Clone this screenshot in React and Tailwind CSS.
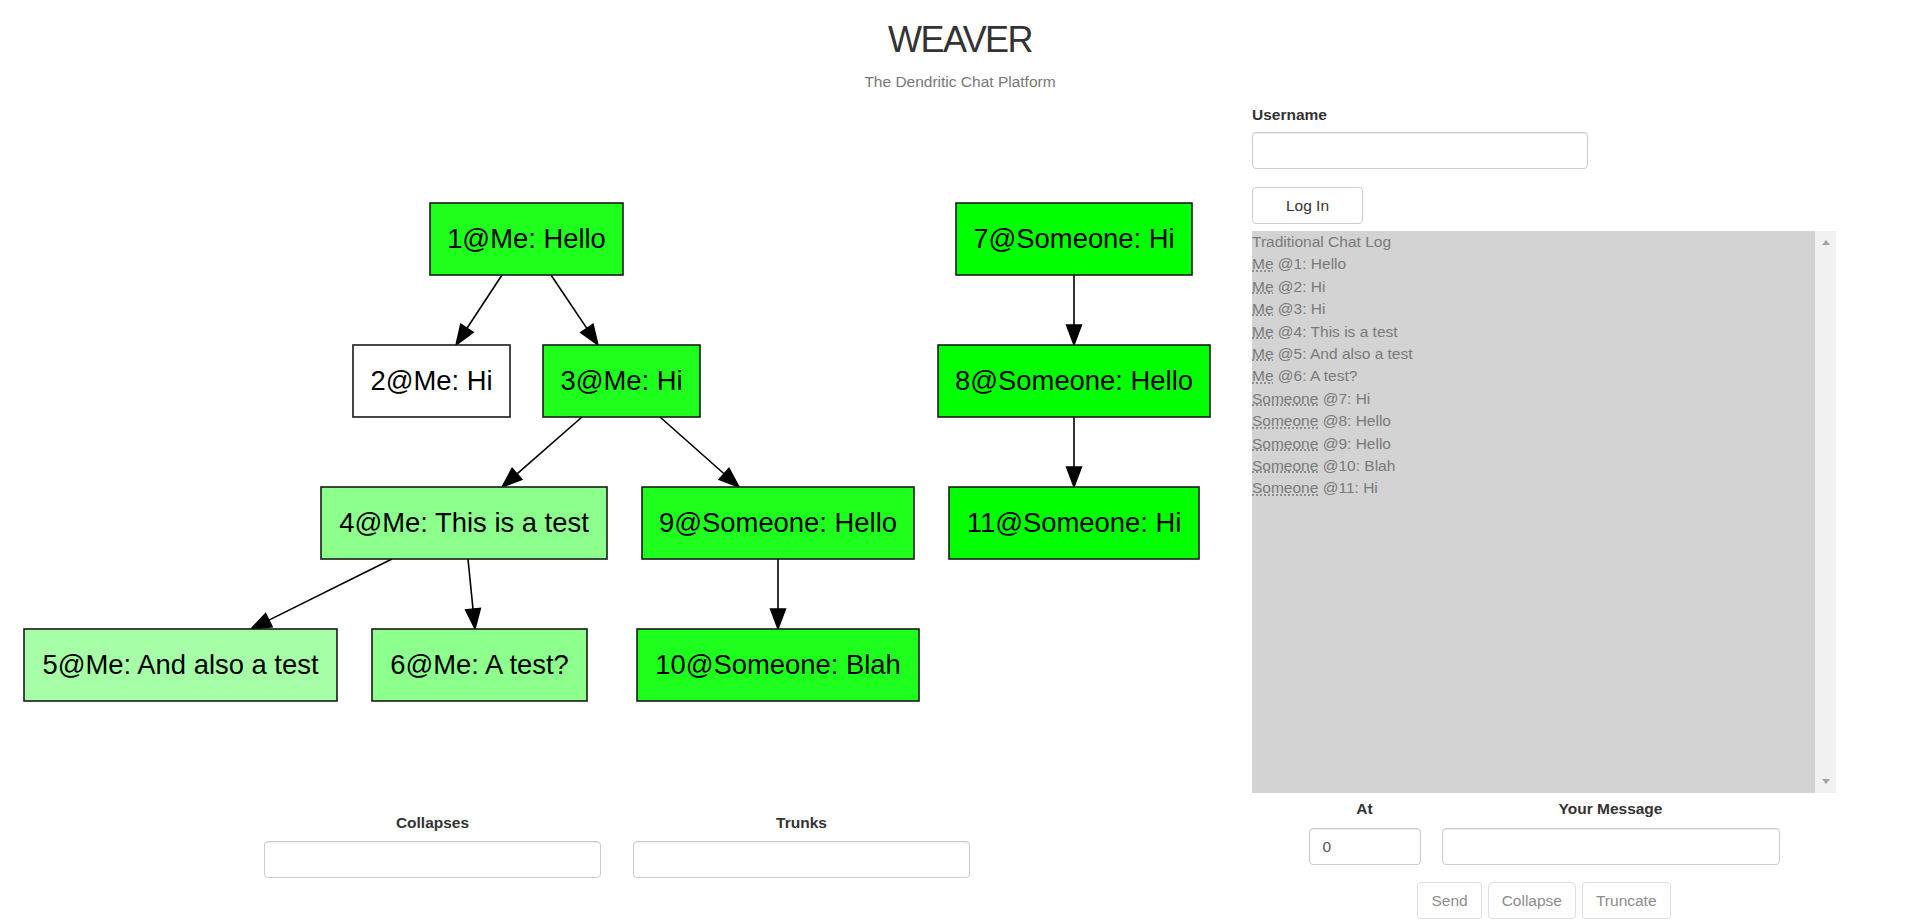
import React from "react"

const nodes = [
  { id: 1, x: 430, y: 203, w: 193, label: "1@Me: Hello", fill: "#1eff1e" },
  { id: 2, x: 353, y: 345, w: 157, label: "2@Me: Hi", fill: "#ffffff" },
  { id: 3, x: 543, y: 345, w: 157, label: "3@Me: Hi", fill: "#1eff1e" },
  { id: 4, x: 321, y: 487, w: 286, label: "4@Me: This is a test", fill: "#8cff8c" },
  { id: 5, x: 24, y: 629, w: 313, label: "5@Me: And also a test", fill: "#a6ffa6" },
  { id: 6, x: 372, y: 629, w: 215, label: "6@Me: A test?", fill: "#8cff8c" },
  { id: 7, x: 956, y: 203, w: 236, label: "7@Someone: Hi", fill: "#00ff00" },
  { id: 8, x: 938, y: 345, w: 272, label: "8@Someone: Hello", fill: "#00ff00" },
  { id: 9, x: 642, y: 487, w: 272, label: "9@Someone: Hello", fill: "#1eff1e" },
  { id: 10, x: 637, y: 629, w: 282, label: "10@Someone: Blah", fill: "#1eff1e" },
  { id: 11, x: 949, y: 487, w: 250, label: "11@Someone: Hi", fill: "#00ff00" },
]

// edges: start point on parent, tip on child
const edges = [
  [502, 275, 456, 345],
  [551, 275, 598, 345],
  [582, 417, 502, 487],
  [660, 417, 739, 487],
  [392, 559, 251, 629],
  [468, 559, 475, 629],
  [778, 559, 778, 629],
  [1074, 275, 1074, 345],
  [1074, 417, 1074, 487],
]

const log = [
  ["Me", 1, "Hello"],
  ["Me", 2, "Hi"],
  ["Me", 3, "Hi"],
  ["Me", 4, "This is a test"],
  ["Me", 5, "And also a test"],
  ["Me", 6, "A test?"],
  ["Someone", 7, "Hi"],
  ["Someone", 8, "Hello"],
  ["Someone", 9, "Hello"],
  ["Someone", 10, "Blah"],
  ["Someone", 11, "Hi"],
]

function Edge({ e }) {
  const [sx, sy, tx, ty] = e
  const len = Math.hypot(tx - sx, ty - sy)
  const dx = (tx - sx) / len
  const dy = (ty - sy) / len
  const bx = tx - dx * 20
  const by = ty - dy * 20
  const nx = -dy * 7.5
  const ny = dx * 7.5
  return (
    <g>
      <line x1={sx} y1={sy} x2={bx} y2={by} stroke="#000" strokeWidth="1.6" />
      <polygon
        points={`${tx},${ty} ${bx + nx},${by + ny} ${bx - nx},${by - ny}`}
        fill="#000"
        stroke="#000"
        strokeWidth="1.4"
      />
    </g>
  )
}

function Graph() {
  return (
    <svg width="1239" height="708" viewBox="0 104 1239 708" className="block">
      {edges.map((e, i) => (
        <Edge key={i} e={e} />
      ))}
      {nodes.map((n) => (
        <g key={n.id}>
          <rect x={n.x} y={n.y} width={n.w} height={72} fill={n.fill} stroke="#1a1a1a" strokeWidth="1.6" />
          <text
            x={n.x + n.w / 2}
            y={n.y + 36 + 8.5}
            textAnchor="middle"
            fontSize="27.4"
            fontFamily="'Liberation Sans', Arial, sans-serif"
            fill="#000"
          >
            {n.label}
          </text>
        </g>
      ))}
    </svg>
  )
}

const inputCls =
  "block h-[37px] rounded-[4px] border border-[#cccccc] bg-white shadow-[inset_0_1px_1px_rgba(0,0,0,0.075)]"

export default function App() {
  return (
    <div className="min-h-[922px] bg-white text-[15.5px] text-[#333333] font-['Liberation_Sans',Arial,sans-serif]">
      <div className="text-center">
        <h1 className="pt-[20px] text-[36px] leading-[40px] tracking-[-1.6px] text-[#333333]">WEAVER</h1>
        <p className="mt-[11px] leading-[22px] text-[#777777]">The Dendritic Chat Platform</p>
      </div>

      <div className="mt-[11px] flex">
        <div className="w-[1239px] shrink-0">
          <Graph />
          <div className="flex justify-center gap-[32px] pr-[5px]">
            <div className="w-[337px]">
              <div className="text-center font-bold leading-[22px]">Collapses</div>
              <div className={`mt-[7px] w-full ${inputCls}`} />
            </div>
            <div className="w-[337px]">
              <div className="text-center font-bold leading-[22px]">Trunks</div>
              <div className={`mt-[7px] w-full ${inputCls}`} />
            </div>
          </div>
        </div>

        <div className="ml-[13px] w-[584px] shrink-0">
          <div className="font-bold leading-[22px]">Username</div>
          <div className={`mt-[6px] w-[336px] ${inputCls}`} />
          <button className="mt-[18px] h-[37px] w-[111px] rounded-[4px] border border-[#cccccc] bg-white text-[#333333]">
            Log In
          </button>

          <div className="mt-[7px] flex h-[562px]">
            <div className="flex-1 bg-[#d3d3d3] leading-[22.4px] text-[#7a7a7a]">
              <div>Traditional Chat Log</div>
              {log.map(([who, n, msg]) => (
                <div key={n}>
                  <abbr title={who} className="underline decoration-dotted">
                    {who}
                  </abbr>{" "}
                  @{n}: {msg}
                </div>
              ))}
            </div>
            <div className="flex w-[21px] flex-col items-center justify-between bg-[#f0f0f0] py-[9px]">
              <div className="h-0 w-0 border-x-[4.5px] border-b-[5px] border-x-transparent border-b-[#a3a3a3]" />
              <div className="h-0 w-0 border-x-[4.5px] border-t-[5px] border-x-transparent border-t-[#a3a3a3]" />
            </div>
          </div>

          <div className="mt-[5px] flex justify-center gap-[21px]">
            <div className="w-[112px]">
              <div className="text-center font-bold leading-[22px]">At</div>
              <div className={`mt-[8px] w-full pl-[13px] leading-[35px] text-[#555555] ${inputCls}`}>0</div>
            </div>
            <div className="w-[338px]">
              <div className="text-center font-bold leading-[22px]">Your Message</div>
              <div className={`mt-[8px] w-full ${inputCls}`} />
            </div>
          </div>

          <div className="mt-[17px] flex justify-center gap-[6px]">
            {["Send", "Collapse", "Truncate"].map((b) => (
              <button
                key={b}
                className="h-[37px] rounded-[4px] border border-[#dedede] bg-white px-[13px] text-[#8c8c8c]"
              >
                {b}
              </button>
            ))}
          </div>
        </div>
      </div>
    </div>
  )
}
